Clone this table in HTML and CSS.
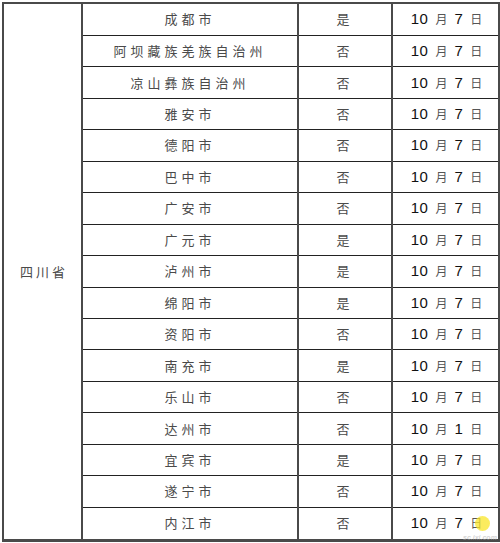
FILE: index.html
```html
<!DOCTYPE html>
<html lang="zh">
<head>
<meta charset="utf-8">
<link rel="stylesheet" href="styles.css">
</head>
<body>
<div class="page">
<table class="grid">
<colgroup>
<col class="c-prov"><col class="c-city"><col class="c-flag"><col class="c-date">
</colgroup>
<tbody>
<tr><td class="prov" rowspan="17">四川省</td><td class="city">成都市</td><td class="flag">是</td><td class="date"><span class="n">10</span>月<span class="n">7</span>日</td></tr>
<tr><td class="city">阿坝藏族羌族自治州</td><td class="flag">否</td><td class="date"><span class="n">10</span>月<span class="n">7</span>日</td></tr>
<tr><td class="city">凉山彝族自治州</td><td class="flag">否</td><td class="date"><span class="n">10</span>月<span class="n">7</span>日</td></tr>
<tr><td class="city">雅安市</td><td class="flag">否</td><td class="date"><span class="n">10</span>月<span class="n">7</span>日</td></tr>
<tr><td class="city">德阳市</td><td class="flag">否</td><td class="date"><span class="n">10</span>月<span class="n">7</span>日</td></tr>
<tr><td class="city">巴中市</td><td class="flag">否</td><td class="date"><span class="n">10</span>月<span class="n">7</span>日</td></tr>
<tr><td class="city">广安市</td><td class="flag">否</td><td class="date"><span class="n">10</span>月<span class="n">7</span>日</td></tr>
<tr><td class="city">广元市</td><td class="flag">是</td><td class="date"><span class="n">10</span>月<span class="n">7</span>日</td></tr>
<tr><td class="city">泸州市</td><td class="flag">是</td><td class="date"><span class="n">10</span>月<span class="n">7</span>日</td></tr>
<tr><td class="city">绵阳市</td><td class="flag">是</td><td class="date"><span class="n">10</span>月<span class="n">7</span>日</td></tr>
<tr><td class="city">资阳市</td><td class="flag">否</td><td class="date"><span class="n">10</span>月<span class="n">7</span>日</td></tr>
<tr><td class="city">南充市</td><td class="flag">是</td><td class="date"><span class="n">10</span>月<span class="n">7</span>日</td></tr>
<tr><td class="city">乐山市</td><td class="flag">否</td><td class="date"><span class="n">10</span>月<span class="n">7</span>日</td></tr>
<tr><td class="city">达州市</td><td class="flag">否</td><td class="date"><span class="n">10</span>月<span class="n">1</span>日</td></tr>
<tr><td class="city">宜宾市</td><td class="flag">是</td><td class="date"><span class="n">10</span>月<span class="n">7</span>日</td></tr>
<tr><td class="city">遂宁市</td><td class="flag">否</td><td class="date"><span class="n">10</span>月<span class="n">7</span>日</td></tr>
<tr><td class="city">内江市</td><td class="flag">否</td><td class="date"><span class="n">10</span>月<span class="n">7</span>日<span class="mark"><span class="blob"></span><span class="wm">sc.ixi.com</span></span></td></tr>
</tbody>
</table>
</div>
</body>
</html>
```
FILE: styles.css
```css
html, body {
  margin: 0;
  padding: 0;
  background: #ffffff;
}
.page {
  padding: 2px 0 0 2px;
  width: 500px;
  height: 543px;
  overflow: hidden;
  box-sizing: border-box;
}
.grid {
  border-collapse: collapse;
  table-layout: fixed;
  width: 496px;
  height: 540px;
  font-family: "Noto Sans CJK SC", "Liberation Sans", sans-serif;
  color: #4a4a4a;
  font-size: 13px;
}
.c-prov { width: 79px; }
.c-city { width: 216px; }
.c-flag { width: 94px; }
.c-date { width: 107px; }
.grid td {
  border-top: 1px solid #222;
  border-bottom: 1px solid #222;
  border-left: 2px solid #4a4a4a;
  border-right: 2px solid #4a4a4a;
  padding: 0;
  text-align: center;
  vertical-align: middle;
  line-height: 16px;
  letter-spacing: 4px;
  white-space: nowrap;
}
.grid td.prov {
  border-top: 2px solid #4a4a4a;
  border-bottom: 3px solid #4a4a4a;
  letter-spacing: 3px;
  padding-left: 3px;
}
.grid tr:first-child td { border-top: 2px solid #4a4a4a; }
.grid tr:last-child td { border-bottom: 3px solid #4a4a4a; }
.grid td.date {
  letter-spacing: 0;
  position: relative;
  color: #555;
  font-size: 12px;
  padding-left: 2px;
}
.date .n {
  font-family: "Liberation Sans", Arial, sans-serif;
  font-size: 15px;
  color: #111;
  letter-spacing: 0.5px;
  margin: 0 7px;
}
.date .n:first-child { margin-left: 0; }
.mark {
  position: absolute;
  left: 70px;
  top: 6px;
  width: 40px;
  height: 28px;
  pointer-events: none;
}
.blob {
  position: absolute;
  left: 12px;
  top: 2px;
  width: 15px;
  height: 15px;
  border-radius: 50%;
  background: rgba(250, 230, 40, 0.75);
}
.wm {
  position: absolute;
  left: 0;
  top: 20px;
  font-family: "Liberation Sans", sans-serif;
  font-style: italic;
  font-weight: bold;
  font-size: 7px;
  line-height: 7px;
  color: rgba(170, 170, 170, 0.5);
  letter-spacing: 0;
}
```
